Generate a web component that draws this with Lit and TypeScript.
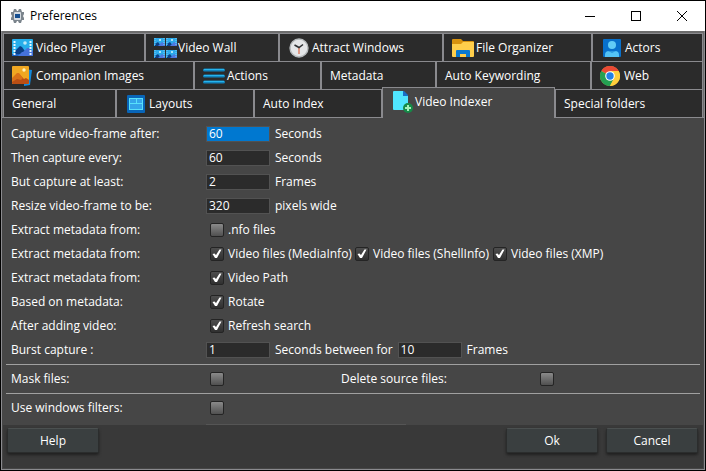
import { LitElement, html, css, svg, nothing, type TemplateResult } from "lit";
import { customElement, state } from "lit/decorators.js";
import { classMap } from "lit/directives/class-map.js";

const scene = (x: number, y: number) => svg`
  <g transform="translate(${x} ${y})">
    <rect width="11" height="8" fill="#2ba9ea"></rect>
    <rect x="5" y="1" width="2" height="2" fill="#a8e2f8"></rect>
    <path d="M1 8V6l3-2 3 4z" fill="#0b3f86"></path>
    <path d="M4 8l4-4 3 2v2z" fill="#4d78e0"></path>
    <path d="M1 0v8M10 0v8" stroke="#7fcdf5" stroke-dasharray="1 1"></path>
  </g>`;

const icons: Record<string, TemplateResult> = {
  player: html`<svg class="icon" width="21" height="18" viewBox="0 0 21 18">
    <rect width="21" height="17" rx="1" fill="#27aeea"></rect>
    <circle cx="13" cy="4" r="1.800" fill="#bdeafa"></circle>
    <path d="M3 15v-3l5-5 2 1 5 7z" fill="#0b3f86"></path>
    <path d="M6 17l4-4 1 0 4-4 2 0 4 3v4q0 1-1 1z" fill="#4672dc"></path>
    <path d="M0 15h8l-2 2H1q-1 0-1-1z" fill="#1d62c4"></path>
    <path d="M2.500 2v14M18.500 2v14" stroke="#e8f7ff" stroke-width="2" stroke-dasharray="2 1"></path>
  </svg>`,
  wall: html`<svg class="icon" width="24" height="20" viewBox="0 0 24 20">
    ${scene(0, 0)}${scene(12, 0)}${scene(0, 12)}${scene(12, 12)}
  </svg>`,
  clock: html`<svg class="icon" width="21" height="20" viewBox="-1 0 21 20">
    <circle cx="10" cy="10" r="9" fill="#e4e6e8" stroke="#b4b8ba" stroke-width="1.400"></circle>
    <path d="M10 10v6" stroke="#e09a86" stroke-width="2"></path>
    <path d="M5.500 7l4.500 2.500 4-3" fill="none" stroke="#2c2f32" stroke-width="1.500"></path>
  </svg>`,
  folder: html`<svg class="icon" width="22" height="18" viewBox="0 0 22 18">
    <path d="M0 1q0-1 1-1h8l2 2h10q1 0 1 1v14H0z" fill="#d8920f"></path>
    <path d="M0 5h9l2-2h11v14q0 1-1 1H1q-1 0-1-1z" fill="#ffce4b"></path>
    <path d="M4 18v-6q0-1 1-1h12q1 0 1 1v6h-4v-3H8v3z" fill="#0a79d0"></path>
  </svg>`,
  actor: html`<svg class="icon" width="20" height="18" viewBox="-2 0 20 18">
    <rect width="18" height="18" rx="1" fill="#0870cb"></rect>
    <circle cx="9" cy="6" r="4" fill="#62ccf6"></circle>
    <path d="M2 18v-2q0-4 4-4h6q4 0 4 4v2z" fill="#54c3f4"></path>
    <path d="M5 12h8L9 14z" fill="#2a96dd"></path>
  </svg>`,
  images: html`<svg class="icon" width="20" height="20" viewBox="0 0 20 20">
    <path d="M12 3l8 1-2 15-6 1z" fill="#1188dc"></path>
    <rect width="17" height="18" rx="1" fill="#f0a722"></rect>
    <circle cx="12" cy="4" r="1.700" fill="#fff2b8"></circle>
    <path d="M0 13l5-5h2l5 5 2-1 3 2v3q0 1-1 1H1q-1 0-1-1z" fill="#ba4e14"></path>
    <path d="M0 12l5-5h2l4 5-2 2-4-1-5 3z" fill="#d97118"></path>
  </svg>`,
  actions: html`<svg class="icon" width="22" height="16" viewBox="0 0 22 16">
    <path d="M1.500 2h19M1.500 8h19M1.500 14h19" stroke="#1186c0" stroke-width="3" stroke-linecap="round"></path>
    <path d="M1 1.500h20M1 7.500h20M1 13.500h20" stroke="#27b4ec"></path>
  </svg>`,
  chrome: html`<svg class="icon" width="20" height="20" viewBox="0 0 20 20">
    <circle cx="10" cy="10" r="10" fill="#ffce3c"></circle>
    <path d="M10 10L1.300 5A10 10 0 0 1 18.700 5z" fill="#ea4a35"></path>
    <path d="M10 10L1.300 5A10 10 0 0 0 10 20l4-8z" fill="#24a052"></path>
    <path d="M10 5h8.700A10 10 0 0 1 10 20l4.500-8z" fill="#ffce3c"></path>
    <circle cx="10" cy="10" r="4.800" fill="#fff"></circle>
    <circle cx="10" cy="10" r="3.700" fill="#2280e5"></circle>
  </svg>`,
  layouts: html`<svg class="icon" width="20" height="18" viewBox="-2 0 20 18">
    <rect width="18" height="18" rx="1" fill="#0865b8"></rect>
    <rect x="2.500" y="3.500" width="13" height="11" fill="#35a5ea" stroke="#58e0fb"></rect>
    <path d="M3 8.500h12M9.500 4v4" stroke="#58e0fb" fill="none"></path>
  </svg>`,
  indexer: html`<svg class="icon" width="22" height="22" viewBox="-2 0 22 22">
    <path d="M0 1q0-1 1-1h9l5 5v14H1q-1 0-1-1z" fill="#50e6ff"></path>
    <path d="M10 0h1l4 4v1h-5z" fill="#1870c8"></path>
    <circle cx="15" cy="17" r="5" fill="#158a48"></circle>
    <path d="M15 14v6M12 17h6" stroke="#a4f0b8" stroke-width="2"></path>
  </svg>`,
};

interface Tab {
  label: string;
  icon?: string;
}

const rows: Tab[][] = [
  [
    { label: "Video Player", icon: "player" },
    { label: "Video Wall", icon: "wall" },
    { label: "Attract Windows", icon: "clock" },
    { label: "File Organizer", icon: "folder" },
    { label: "Actors", icon: "actor" },
  ],
  [
    { label: "Companion Images", icon: "images" },
    { label: "Actions", icon: "actions" },
    { label: "Metadata" },
    { label: "Auto Keywording" },
    { label: "Web", icon: "chrome" },
  ],
  [
    { label: "General" },
    { label: "Layouts", icon: "layouts" },
    { label: "Auto Index" },
    { label: "Video Indexer", icon: "indexer" },
    { label: "Special folders" },
  ],
];

@customElement("app-root")
export class AppRoot extends LitElement {
  static styles = css`
    :host {
      display: block;
      font: 12px/16px "Open Sans", "Noto Sans", sans-serif;
      color: #fff;
    }
    * {
      box-sizing: border-box;
    }
    button,
    input {
      font: inherit;
      color: inherit;
      margin: 0;
    }
    .window {
      display: flex;
      flex-direction: column;
      min-height: 100vh;
      border: 1px solid #000;
      background: #464646;
    }
    .titlebar {
      display: flex;
      align-items: center;
      height: 30px;
      padding-left: 9px;
      background: #fff;
      color: #000;
    }
    .title {
      flex: 1;
      margin: 0 0 0 5px;
      font-size: 12px;
      font-weight: 400;
    }
    .caption {
      display: grid;
      place-items: center;
      width: 46px;
      height: 30px;
      padding: 0;
      border: 0;
      background: none;
    }
    .body {
      flex: 1;
      display: flex;
      flex-direction: column;
      border: 1px solid #8a8a8e;
      border-top: 0;
    }
    .tabs {
      padding: 2px 1px 0;
      background: #6c6c6c;
      border-bottom: 1px solid #8a8a8e;
    }
    .tabrow {
      display: grid;
    }
    .row0 {
      grid-template-columns: 142fr 134fr 164fr 149fr 111fr;
    }
    .row1 {
      grid-template-columns: 191fr 127fr 115fr 155fr 112fr;
    }
    .row2 {
      grid-template-columns: 113fr 138fr 128fr 173fr 148fr;
    }
    .tab {
      display: flex;
      align-items: center;
      height: 28px;
      min-width: 0;
      padding: 0 0 0 8px;
      border: solid #8a8a8e;
      border-width: 1px 1px 0;
      border-radius: 0;
      background: #2b2b2b;
      white-space: nowrap;
    }
    .tab.selected {
      height: 31px;
      margin: -2px 0 -1px;
      padding-bottom: 3px;
      background: #464646;
      z-index: 1;
    }
    .slot {
      display: grid;
      place-items: center start;
      flex: none;
      width: 24px;
    }
    .icon {
      display: block;
    }
    .panel {
      flex: 1;
      padding: 4px 4px 0;
    }
    .line {
      display: grid;
      grid-template-columns: 195px 1fr;
      align-items: center;
      height: 24px;
      padding-left: 5px;
    }
    .fields {
      display: flex;
      align-items: center;
      gap: 5px;
    }
    .num {
      width: 64px;
      height: 16px;
      padding: 0 2px;
      border: 1px solid #525252;
      border-radius: 0;
      background: #2b2b2b;
      outline: none;
    }
    .num.active {
      background: #0078d0;
    }
    .between {
      white-space: nowrap;
    }
    .checks {
      display: grid;
      grid-template-columns: 145px 138px 1fr;
      padding-left: 4px;
    }
    .check {
      display: flex;
      align-items: center;
      gap: 4px;
      white-space: nowrap;
    }
    .box {
      appearance: none;
      display: grid;
      place-items: center;
      flex: none;
      width: 14px;
      height: 14px;
      border: 1px solid #242424;
      border-radius: 2px;
      background: linear-gradient(#8a8a8a, #505050);
    }
    .box:checked {
      background: linear-gradient(#4e4e4e, #303030);
    }
    .box:checked::before {
      content: "";
      width: 10px;
      height: 10px;
      background: #fff;
      clip-path: polygon(5% 50%, 25% 45%, 40% 60%, 75% 5%, 95% 5%, 50% 90%, 30% 90%);
    }
    .ruled {
      height: 29px;
      border-top: 1px solid #a0a0a0;
    }
    .first {
      margin-top: 2px;
    }
    .split {
      grid-template-columns: 195px 135px 195px 1fr;
    }
    .single {
      padding-left: 4px;
    }
    .more {
      width: 200px;
      margin: 2px 0 0 200px;
      border-top: 1px solid #555;
    }
    .footer {
      display: flex;
      gap: 8px;
      height: 43px;
      margin: 0 1px 1px;
      padding: 3px 5px 0 4px;
      background: #393939;
    }
    .button {
      width: 92px;
      height: 25px;
      padding: 0;
      border: 1px solid #2b2d2d;
      border-top-color: #4b5050;
      border-radius: 2px;
      background: #3a3f40;
      box-shadow: 0 2px 3px #202020;
    }
    .help {
      margin-right: auto;
    }
  `;

  @state() private selected = "Video Indexer";

  private field(label: string, id: string, value: string, unit: string, active = false) {
    return html`<div class="line">
      <label for=${id}>${label}</label>
      <div class="fields">
        <input class=${classMap({ num: true, active })} id=${id} type="text" .value=${value} />
        <span>${unit}</span>
      </div>
    </div>`;
  }

  private checks(label: string, options: string[], checked = true) {
    return html`<div class="line">
      <span>${label}</span>
      <div class="checks">
        ${options.map(
          (o) => html`<label class="check"><input class="box" type="checkbox" ?checked=${checked} />${o}</label>`
        )}
      </div>
    </div>`;
  }

  render() {
    return html`<div class="window">
      <header class="titlebar">
        <svg width="15" height="14" viewBox="0 0 15 14">
          <path d="M4 0h2l1 2h1l1-2h2l1 3h2v2l-1 2 1 2v2h-2l-1 3H9l-1-2H7l-1 2H4l-1-3H1V9l1-2-1-2V3h2z" fill="#7b848c"></path>
          <rect x="4" y="3" width="7" height="8" rx="1" fill="#d4dae0"></rect>
          <rect x="5" y="5" width="5" height="4" fill="#164f91"></rect>
        </svg>
        <h1 class="title">Preferences</h1>
        <button class="caption" aria-label="Minimize">
          <svg width="10" height="10"><path d="M0 5.500h10" stroke="#000"></path></svg>
        </button>
        <button class="caption" aria-label="Maximize">
          <svg width="10" height="10"><rect x=".5" y=".5" width="9" height="9" fill="none" stroke="#000"></rect></svg>
        </button>
        <button class="caption" aria-label="Close">
          <svg width="10" height="10"><path d="M0 0l10 10M10 0L0 10" stroke="#000"></path></svg>
        </button>
      </header>
      <div class="body">
        <nav class="tabs" role="tablist">
          ${rows.map(
            (tabs, i) => html`<div class="tabrow row${i}" role="presentation">
              ${tabs.map(
                (t) => html`<button
                  role="tab"
                  aria-selected=${t.label === this.selected}
                  class=${classMap({ tab: true, selected: t.label === this.selected })}
                  @click=${() => (this.selected = t.label)}
                >
                  ${t.icon ? html`<span class="slot">${icons[t.icon]}</span>` : nothing}${t.label}
                </button>`
              )}
            </div>`
          )}
        </nav>
        <main class="panel">
          ${this.field("Capture video-frame after:", "after", "60", "Seconds", true)}
          ${this.field("Then capture every:", "every", "60", "Seconds")}
          ${this.field("But capture at least:", "least", "2", "Frames")}
          ${this.field("Resize video-frame to be:", "resize", "320", "pixels wide")}
          ${this.checks("Extract metadata from:", [".nfo files"], false)}
          ${this.checks("Extract metadata from:", [
            "Video files (MediaInfo)",
            "Video files (ShellInfo)",
            "Video files (XMP)",
          ])}
          ${this.checks("Extract metadata from:", ["Video Path"])}
          ${this.checks("Based on metadata:", ["Rotate"])}
          ${this.checks("After adding video:", ["Refresh search"])}
          <div class="line">
            <label for="burst">Burst capture :</label>
            <div class="fields">
              <input class="num" id="burst" type="text" value="1" />
              <label class="between" for="frames">Seconds between for</label>
              <input class="num" id="frames" type="text" value="10" />
              <span>Frames</span>
            </div>
          </div>
          <div class="line ruled first split">
            <label for="mask">Mask files:</label>
            <div class="single"><input class="box" id="mask" type="checkbox" /></div>
            <label for="delete">Delete source files:</label>
            <div class="single"><input class="box" id="delete" type="checkbox" /></div>
          </div>
          <div class="line ruled">
            <label for="filters">Use windows filters:</label>
            <div class="single"><input class="box" id="filters" type="checkbox" /></div>
          </div>
          <div class="more"></div>
        </main>
        <footer class="footer">
          <button class="button help">Help</button>
          <button class="button">Ok</button>
          <button class="button">Cancel</button>
        </footer>
      </div>
    </div>`;
  }
}
